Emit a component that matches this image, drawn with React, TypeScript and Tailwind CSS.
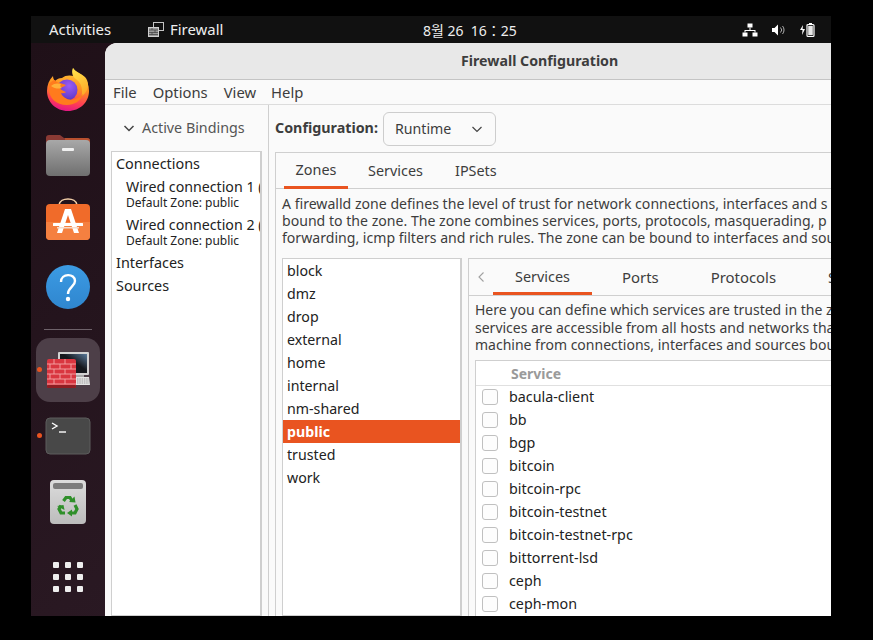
import React from 'react';

const zones = ['block', 'dmz', 'drop', 'external', 'home', 'internal', 'nm-shared', 'public', 'trusted', 'work'];
const services = ['bacula-client', 'bb', 'bgp', 'bitcoin', 'bitcoin-rpc', 'bitcoin-testnet', 'bitcoin-testnet-rpc', 'bittorrent-lsd', 'ceph', 'ceph-mon'];

const FirefoxIcon = () => (
  <svg width="44" height="44" viewBox="0 0 44 44">
    <defs>
      <linearGradient id="ffOuter" x1="0.6" y1="0" x2="0.4" y2="1">
        <stop offset="0" stopColor="#ffcf3a" />
        <stop offset="0.45" stopColor="#ff8f22" />
        <stop offset="0.78" stopColor="#ff3d55" />
        <stop offset="1" stopColor="#e31587" />
      </linearGradient>
      <linearGradient id="ffFlame" x1="0.3" y1="0" x2="0.6" y2="1">
        <stop offset="0" stopColor="#ffe14a" />
        <stop offset="1" stopColor="#ffa726" />
      </linearGradient>
      <radialGradient id="ffGlobe" cx="0.6" cy="0.3" r="0.85">
        <stop offset="0" stopColor="#9a5cf5" />
        <stop offset="0.65" stopColor="#6a3fd0" />
        <stop offset="1" stopColor="#42299a" />
      </radialGradient>
    </defs>
    <path d="M27 1c-1 4 0 6 1 8-4-1-9-1-12 2-3 0-5 1-7 3-1-1-2-3-2-5-4 4-6 9-6 15 0 11 9 20 21 20s21-9 21-20c0-6-2-10-5-14-4-4-9-5-11-9z" fill="url(#ffOuter)" />
    <path d="M27 1c-2 5 0 9 3 11 4 3 6 7 6 12 0 2 0 4-1 6 4-3 7-7 7-12 0-3-1-6-3-8-4-4-10-5-12-9z" fill="url(#ffFlame)" />
    <circle cx="21" cy="23" r="10.5" fill="url(#ffGlobe)" />
    <path d="M3 17c2-2 4-4 6-4 1 2 3 3 5 3l6 2c-2 2-5 2-6 3 0 1 3 3 6 4 0 0-2 2-5 1 2 5 8 8 14 6 3-1 6-3 8-5-2 7-9 11-16 11C10 38 3 31 3 22z" fill="#ff7b1d" />
    <path d="M5 19c3-3 7-3 10-2-1 1-1 3 1 4-3 1-7 1-11-2z" fill="#ffb03a" />
  </svg>
);

const FilesIcon = () => (
  <svg width="46" height="44" viewBox="0 0 46 44">
    <defs>
      <linearGradient id="fileFront" x1="0" y1="0" x2="0" y2="1">
        <stop offset="0" stopColor="#a8a8a8" />
        <stop offset="1" stopColor="#6f6f6f" />
      </linearGradient>
    </defs>
    <path d="M1 5a3 3 0 0 1 3-3h11l4 3h23a3 3 0 0 1 3 3v10H1z" fill="#8a3a34" />
    <path d="M20 5h22a3 3 0 0 1 3 3v6H20z" fill="#b8502f" />
    <rect x="1" y="7" width="44" height="36" rx="4" fill="url(#fileFront)" />
    <rect x="17" y="15" width="12" height="3" rx="1" fill="#f0f0f0" />
  </svg>
);

const StoreIcon = () => (
  <svg width="46" height="46" viewBox="0 0 46 46">
    <path d="M14 7c1-8 17-8 18 0" fill="none" stroke="#f3cfa8" strokeWidth="1.6" />
    <rect x="1" y="6" width="44" height="36" rx="4" fill="#f06b2a" />
    <path d="M1 24h44v14a4 4 0 0 1-4 4H5a4 4 0 0 1-4-4z" fill="#f58040" />
    <path d="M20 11h6l8 24h-5l-6-18-6 18h-5z" fill="#ffffff" />
    <rect x="8" y="25" width="30" height="3" rx="0.5" fill="#ffffff" />
    <rect x="12" y="29" width="22" height="1.5" fill="#f6dccb" />
  </svg>
);

const HelpIcon = () => (
  <svg width="44" height="44" viewBox="0 0 44 44">
    <defs>
      <linearGradient id="helpBg" x1="0" y1="0" x2="0" y2="1">
        <stop offset="0" stopColor="#3c9be3" />
        <stop offset="1" stopColor="#2f86cf" />
      </linearGradient>
    </defs>
    <circle cx="22" cy="22" r="22" fill="url(#helpBg)" />
    <path d="M15 17c0-9 14-9 14-1 0 6-7 6-7 13" fill="none" stroke="#fff" strokeWidth="2.4" />
    <circle cx="22" cy="34" r="2.2" fill="#fff" />
  </svg>
);

const FirewallIcon = () => (
  <svg width="46" height="38" viewBox="0 0 46 38">
    <defs>
      <linearGradient id="fwScreen" x1="0" y1="1" x2="1" y2="0">
        <stop offset="0.55" stopColor="#15181d" />
        <stop offset="1" stopColor="#5a7a9a" />
      </linearGradient>
    </defs>
    <rect x="13" y="1" width="31" height="23" rx="1" fill="#d2d2d2" />
    <rect x="15" y="3" width="27" height="19" fill="url(#fwScreen)" />
    <rect x="31" y="24" width="8" height="2" fill="#a8a8a8" />
    <path d="M31 26h13l1 8H31z" fill="#e4e4e4" />
    <path d="M32 28h12M32 30h12M32 32h12" stroke="#8a8a8a" strokeWidth="0.8" strokeDasharray="1.5 0.8" />
    <rect x="2" y="8" width="29" height="29" rx="2" fill="#d93640" />
    <path d="M2 13h29M2 18h29M2 23h29M2 28h29M2 33h29M9 8v5M20 8v5M5 13v5M15 13v5M26 13v5M9 18v5M20 18v5M5 23v5M15 23v5M26 23v5M9 28v5M20 28v5" stroke="#f5a8a8" strokeWidth="0.9" />
    <rect x="2" y="34" width="29" height="3" rx="1" fill="#8f1d22" />
  </svg>
);

const TerminalIcon = () => (
  <svg width="46" height="38" viewBox="0 0 46 38">
    <rect x="1" y="1" width="44" height="36" rx="4" fill="#484848" stroke="#5c5c5c" />
    <path d="M7 6l5 3-5 3" fill="none" stroke="#fff" strokeWidth="1.4" />
    <path d="M14 15h7" stroke="#fff" strokeWidth="1.4" />
  </svg>
);

const TrashIcon = () => (
  <svg width="38" height="46" viewBox="0 0 38 46">
    <defs>
      <linearGradient id="trashBg" x1="0" y1="0" x2="0" y2="1">
        <stop offset="0" stopColor="#dcdcdc" />
        <stop offset="1" stopColor="#bcbcbc" />
      </linearGradient>
    </defs>
    <rect x="1" y="1" width="36" height="44" rx="4" fill="url(#trashBg)" />
    <rect x="4" y="4" width="30" height="6" rx="2" fill="#7c7c7c" />
    <g fill="none" stroke="#2f8f2a" strokeWidth="3.2">
      <path d="M14.5 22l2.5-3.5h4l2 3.5" />
      <path d="M26 26l2 4-2 4h-4" />
      <path d="M16 34h-4l-2-4 2-3.5" />
    </g>
    <g fill="#2f8f2a">
      <path d="M20 23l6.5 0.5-1-6z" />
      <path d="M23 30.500v7l-5-3.500z" />
      <path d="M8 27l6.500-1 1 5z" />
    </g>
  </svg>
);

const AppGrid = () => (
  <div className="grid grid-cols-3 gap-x-[6px] gap-y-[6px]">
    {Array.from({ length: 9 }).map((_, i) => (
      <div key={i} className="w-[6px] h-[6px] rounded-[1px] bg-[#eeeeee]" />
    ))}
  </div>
);

const NetworkIcon = () => (
  <svg width="16" height="14" viewBox="0 0 16 14" fill="#ffffff">
    <rect x="5.5" y="0.5" width="5" height="4" />
    <rect x="0.5" y="9.5" width="5" height="4" />
    <rect x="10.5" y="9.5" width="5" height="4" />
    <path d="M7.5 4.5h1v2.500h5v2.500h-1V8H3.500v1.500h-1V7h5z" />
  </svg>
);

const VolumeIcon = () => (
  <svg width="15" height="14" viewBox="0 0 15 14" fill="none">
    <path d="M1 5h2.500L7 1.500v11L3.500 9H1z" fill="#ffffff" />
    <path d="M9.500 4.500a3.500 3.500 0 0 1 0 5M11.500 3a6 6 0 0 1 0 8" stroke="#bdbdbd" strokeWidth="0.9" />
  </svg>
);

const BatteryIcon = () => (
  <svg width="16" height="16" viewBox="0 0 16 16" fill="none">
    <path d="M4 3L1 8h2.500L3 13l3-6H3.600z" fill="#ffffff" />
    <rect x="8" y="2.500" width="7" height="12" rx="1" stroke="#ffffff" strokeWidth="1.2" />
    <rect x="10" y="1" width="3" height="1.500" fill="#ffffff" />
    <rect x="9.200" y="3.800" width="4.600" height="9.400" fill="#ffffff" opacity="0.9" />
  </svg>
);

const TopAppIcon = () => (
  <svg width="16" height="15" viewBox="0 0 16 15" fill="none">
    <rect x="5.500" y="0.500" width="10" height="8" stroke="#c4c4c4" />
    <rect x="0.500" y="5.500" width="10" height="9" fill="#9a9a9a" stroke="#d0d0d0" />
    <path d="M1 8h9M1 10.500h9M1 12.500h9M4 6v2M7 8v2.500M4 10.500v2" stroke="#3d3d3d" strokeWidth="0.7" />
  </svg>
);

function DockItem({ children, dot, active }: { children: React.ReactNode; dot?: boolean; active?: boolean }) {
  return (
    <div className={`relative w-[64px] h-[64px] flex items-center justify-center rounded-[14px] ${active ? 'bg-[#4d3f48]' : ''}`}>
      {dot && <span className="absolute left-[1px] top-[29px] w-[5px] h-[5px] rounded-full bg-[#e95420]" />}
      {children}
    </div>
  );
}

export default function App() {
  return (
    <div className="w-[873px] h-[640px] bg-black overflow-hidden pt-[16px] pl-[31px] text-[14.4px] text-[#3d3d3d] font-['Noto_Sans',sans-serif]">
      <div className="w-[800px] h-[600px] flex flex-col overflow-hidden">
        {/* top bar */}
        <div className="h-[27px] shrink-0 bg-[#111111] text-[#eeeeee] flex items-center relative">
          <span className="ml-[18px] text-[14.9px]">Activities</span>
          <span className="ml-[37px]"><TopAppIcon /></span>
          <span className="ml-[6px] text-[14.9px]">Firewall</span>
          <span className="absolute left-[392px] top-[6px] text-[14px] leading-[18px] whitespace-nowrap font-['Noto_Sans','Noto_Sans_CJK_KR',sans-serif]">8월 26&nbsp; 16：25</span>
          <div className="ml-auto mr-[16px] flex items-center gap-[13px]">
            <NetworkIcon />
            <VolumeIcon />
            <BatteryIcon />
          </div>
        </div>

        <div className="flex flex-1 min-h-0 bg-gradient-to-br from-[#1f1018] to-[#33202c]">
          {/* dock */}
          <div className="w-[74px] shrink-0 flex flex-col items-center pt-[14px] pr-[1px]">
            <div className="flex flex-col items-center gap-[2px]">
              <DockItem><FirefoxIcon /></DockItem>
              <DockItem><FilesIcon /></DockItem>
              <DockItem><StoreIcon /></DockItem>
              <DockItem><HelpIcon /></DockItem>
            </div>
            <div className="w-[48px] h-px bg-[#6e626a] mt-[10px] mb-[8px]" />
            <div className="flex flex-col items-center gap-[2px]">
              <DockItem dot active><FirewallIcon /></DockItem>
              <DockItem dot><TerminalIcon /></DockItem>
              <DockItem><TrashIcon /></DockItem>
            </div>
            <div className="mt-[11px] w-[64px] h-[64px] flex items-center justify-center"><AppGrid /></div>
          </div>

          {/* window */}
          <div className="flex-1 min-w-0 flex flex-col bg-[#fafafa] rounded-tl-[12px] overflow-hidden">
            <div className="h-[37px] shrink-0 bg-[#e8e8e8] border-b border-[#c4c4c4] pl-[356px] pb-[1px] flex items-center font-bold text-[#3d3d3d] whitespace-nowrap text-[14.2px]">
              Firewall Configuration
            </div>
            <div className="h-[25px] shrink-0 border-b border-[#dcdcdc] flex items-center pl-[8px] gap-[16px] whitespace-nowrap text-[14.8px]">
              <span>File</span>
              <span>Options</span>
              <span>View</span>
              <span className="-ml-[1px]">Help</span>
            </div>

            <div className="flex flex-1 min-h-0">
              {/* bindings */}
              <div className="w-[164px] shrink-0 border-r border-[#cfcfcf] flex flex-col pl-[6px] pr-[6px]">
                <div className="h-[46px] shrink-0 flex items-center pl-[12px] gap-[7px] text-[#555555] text-[14.3px]">
                  <svg width="12" height="12" viewBox="0 0 12 12" fill="none"><path d="M1.500 4l4.500 4.500L10.500 4" stroke="#444444" strokeWidth="1.5" /></svg>
                  <span>Active Bindings</span>
                </div>
                <div className="flex-1 bg-white border border-[#cfcfcf] border-r-[2px] overflow-hidden pl-[4px] pt-[2px] whitespace-nowrap text-[#222222]">
                  <div className="h-[23px] leading-[20px]">Connections</div>
                  <div className="pl-[10px] h-[38px]">
                    <div className="leading-[19px] h-[19px] text-[14.2px]">Wired connection 1 (</div>
                    <div className="text-[12px] leading-[14px]">Default Zone: public</div>
                  </div>
                  <div className="pl-[10px] h-[38px]">
                    <div className="leading-[19px] h-[19px] text-[14.2px]">Wired connection 2 (</div>
                    <div className="text-[12px] leading-[14px]">Default Zone: public</div>
                  </div>
                  <div className="h-[23px] leading-[20px]">Interfaces</div>
                  <div className="h-[23px] leading-[20px]">Sources</div>
                </div>
              </div>

              {/* configuration */}
              <div className="flex-1 min-w-0 flex flex-col pl-[6px] overflow-hidden">
                <div className="h-[47px] shrink-0 flex items-center whitespace-nowrap">
                  <span className="font-bold text-[14.3px] -mt-[2px]">Configuration:</span>
                  <div className="ml-[5px] w-[113px] h-[34px] shrink-0 bg-[#fafafa] border border-[#cdcdcd] rounded-[6px] flex items-center justify-between pl-[11px] pr-[12px] text-[14.2px]">
                    <span>Runtime</span>
                    <svg width="12" height="12" viewBox="0 0 12 12" fill="none"><path d="M1.500 4l4.500 4.500L10.500 4" stroke="#444444" strokeWidth="1.2" /></svg>
                  </div>
                </div>

                <div className="flex-1 min-h-0 border-l border-t border-[#cfcfcf] flex flex-col w-[600px] text-[14.2px]">
                  <div className="h-[36px] shrink-0 border-b border-[#cfcfcf] flex pl-[8px] whitespace-nowrap text-[14.4px]">
                    <div className="w-[64px] shrink-0 flex items-center justify-center border-b-[3px] border-[#e95420] h-[36px]">Zones</div>
                    <div className="ml-[20px] w-[55px] shrink-0 flex items-center justify-center">Services</div>
                    <div className="ml-[32px] flex items-center">IPSets</div>
                  </div>

                  <div className="pl-[6px] pt-[6px] leading-[17.2px] h-[69px] shrink-0 whitespace-nowrap text-[#3d3d3d] text-[14.1px]">
                    <div>A firewalld zone defines the level of trust for network connections, interfaces and s</div>
                    <div>bound to the zone. The zone combines services, ports, protocols, masquerading, p</div>
                    <div>forwarding, icmp filters and rich rules. The zone can be bound to interfaces and sou</div>
                  </div>

                  <div className="flex-1 min-h-0 flex pl-[6px]">
                    <div className="w-[180px] shrink-0 bg-white border border-[#cfcfcf] border-r-[2px] overflow-hidden text-[#222222]">
                      {zones.map((z) => (
                        <div
                          key={z}
                          className={`h-[23px] leading-[23px] pl-[4px] ${z === 'public' ? 'bg-[#e95420] text-white font-bold' : ''}`}
                        >
                          {z}
                        </div>
                      ))}
                    </div>

                    <div className="ml-[6px] flex-1 min-w-0 border-l border-t border-[#cfcfcf] flex flex-col overflow-hidden">
                      <div className="h-[37px] shrink-0 border-b border-[#cfcfcf] flex whitespace-nowrap text-[14.4px]">
                        <div className="w-[24px] shrink-0 flex items-center justify-center">
                          <svg width="8" height="12" viewBox="0 0 8 12" fill="none"><path d="M6.500 1.500L2 6l4.500 4.500" stroke="#a0a0a0" strokeWidth="1.1" /></svg>
                        </div>
                        <div className="w-[99px] shrink-0 flex items-center justify-center border-b-[3px] border-[#e95420] pt-[3px]">Services</div>
                        <div className="ml-[30px] shrink-0 flex items-center text-[14.9px]">Ports</div>
                        <div className="ml-[52px] shrink-0 flex items-center text-[14.9px]">Protocols</div>
                        <div className="ml-[52px] shrink-0 flex items-center text-[14.9px]">Source Ports</div>
                      </div>
                      <div className="pl-[6px] pt-[5px] leading-[17.5px] h-[64px] shrink-0 whitespace-nowrap text-[#3d3d3d] text-[14px]">
                        <div>Here you can define which services are trusted in the zone. Trusted</div>
                        <div>services are accessible from all hosts and networks that can reach the</div>
                        <div>machine from connections, interfaces and sources bound to this zone.</div>
                      </div>
                      <div className="ml-[6px] flex-1 min-h-0 border-l border-t border-[#cfcfcf] bg-white overflow-hidden text-[14.3px]">
                        <div className="h-[25px] border-b border-[#e0e0e0] pl-[35px] flex items-center font-bold text-[#9a9a9a] text-[14px]">
                          <span>Service</span>
                        </div>
                        <div className="-mt-[1px]">
                          {services.map((s) => (
                            <div key={s} className="h-[23px] flex items-center pl-[6px] text-[#222222] whitespace-nowrap">
                              <span className="w-[16px] h-[16px] shrink-0 rounded-[3px] border border-[#c0c0c0] bg-[#fdfdfd]" />
                              <span className="ml-[11px]">{s}</span>
                            </div>
                          ))}
                        </div>
                      </div>
                    </div>
                  </div>
                </div>
              </div>
            </div>
          </div>
        </div>
      </div>
    </div>
  );
}
